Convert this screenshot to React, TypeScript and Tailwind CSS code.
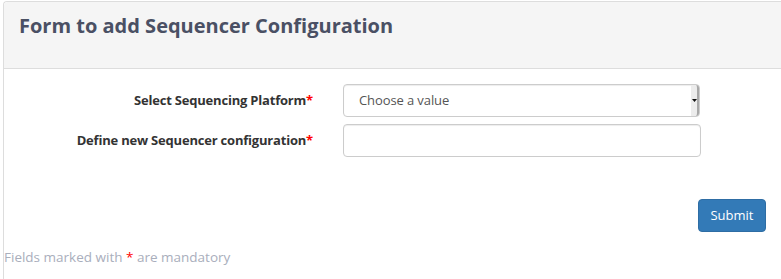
export default function App() {
  return (
    <div className="w-[781px] h-[279px] overflow-hidden bg-white pl-[3px] pt-[1px] font-['Open_Sans',sans-serif]">
      <div className="border-l border-t border-[#dddddd] rounded-tl-[4px] h-[240px]">
        {/* Header */}
        <div className="h-[67px] bg-[#f5f5f5] border-b border-[#dddddd] rounded-tl-[4px] pl-[15px] pt-[10px]">
          <h3 className="text-[20px] font-bold text-[#4a5064] leading-[28px]">
            Form to add Sequencer Configuration
          </h3>
        </div>

        {/* Body */}
        <div className="pt-[15px]">
          <div className="flex items-center h-[33px]">
            <label className="w-[309px] text-right text-[13px] font-bold tracking-[-0.2px] text-[#333333]">
              Select Sequencing Platform<span className="text-[#ff0000]">*</span>
            </label>
            <div className="ml-[30px] w-[357px] h-[33px] border border-[#cccccc] rounded-[4px] flex items-center relative shadow-[inset_0_1px_1px_rgba(0,0,0,0.075)]">
              <span className="pl-[15px] text-[13px] text-[#555555] tracking-[-0.1px]">Choose a value</span>
              <div className="absolute right-0 top-0 bottom-0 w-[8px] bg-[#ececec] border-r-2 border-[#a8a8a8] rounded-r-[3px] flex items-center justify-center">
                <svg width="5" height="3" viewBox="0 0 5 3">
                  <path d="M0 0h5L2.5 3z" fill="#111" />
                </svg>
              </div>
            </div>
          </div>

          <div className="flex items-center h-[33px] mt-[7px]">
            <label className="w-[309px] text-right text-[13px] font-bold tracking-[-0.2px] text-[#333333]">
              Define new Sequencer configuration<span className="text-[#ff0000]">*</span>
            </label>
            <input
              type="text"
              className="ml-[30px] w-[358px] h-[33px] border border-[#cccccc] rounded-[4px] outline-none px-[12px] text-[13px] shadow-[inset_0_1px_1px_rgba(0,0,0,0.075)]"
            />
          </div>

          <div className="flex justify-end pr-[15px] mt-[42px]">
            <button className="w-[68px] h-[33px] bg-[#337ab7] border border-[#2e6da4] rounded-[4px] text-white text-[13px]">
              Submit
            </button>
          </div>
        </div>
      </div>
      <div className="border-l border-[#dddddd] h-[38px]">
        <p className="text-[13.5px] text-[#a9aebc] leading-[20px] pt-[6px]">
          Fields marked with <span className="text-[#ff0000]">*</span> are mandatory
        </p>
      </div>
    </div>
  );
}
